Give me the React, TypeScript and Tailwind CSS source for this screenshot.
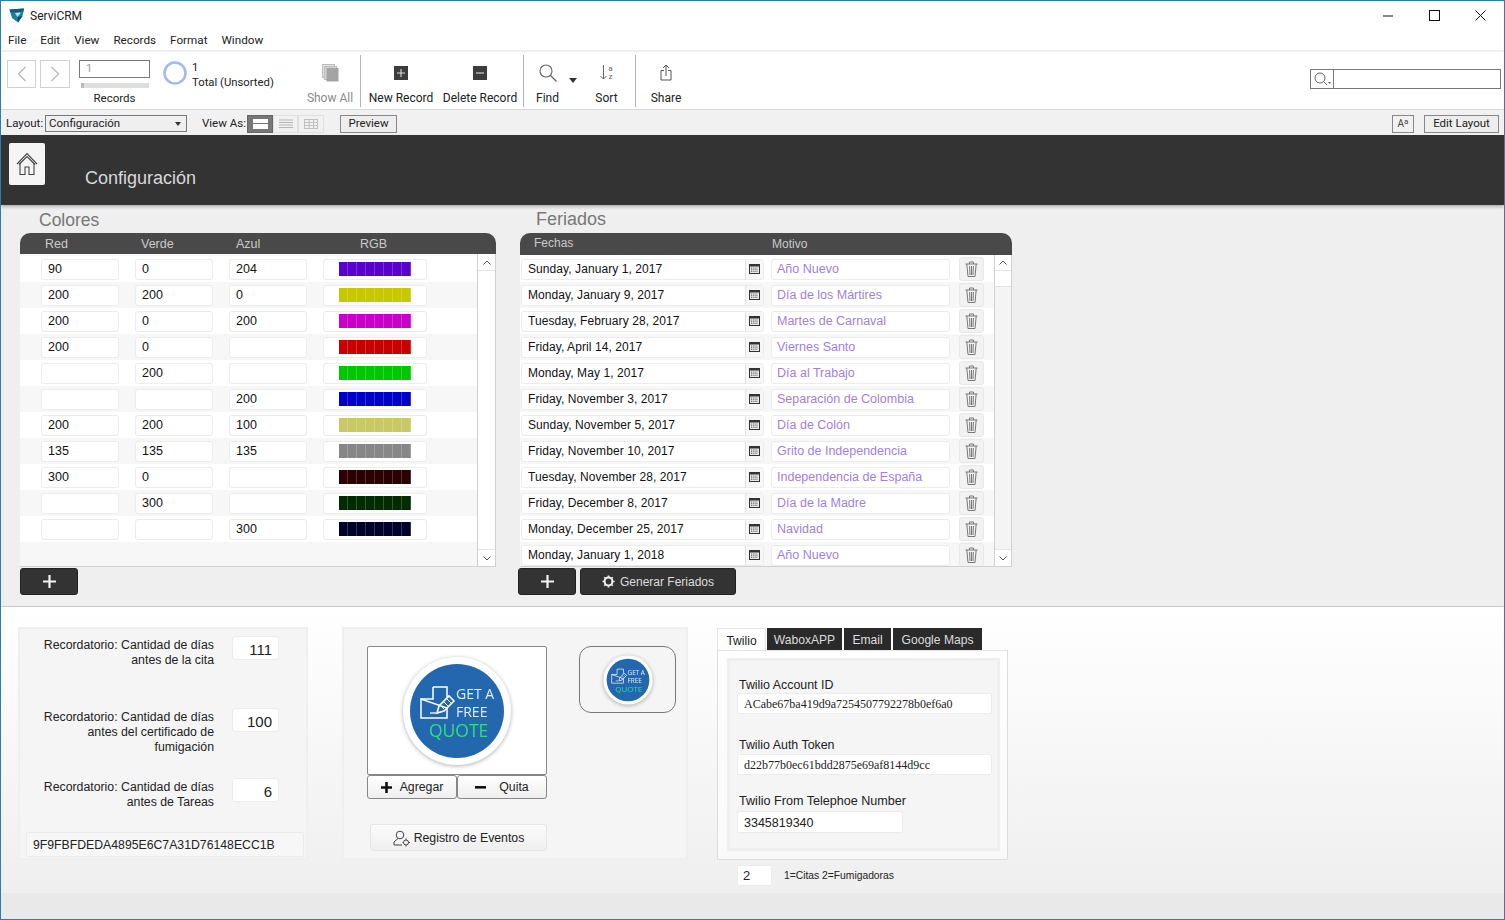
import React from "react";

const sans = "font-['Liberation_Sans',Arial,sans-serif]";
const ui = "font-['Roboto',sans-serif]";

const colours: [string, string, string, number[]][] = [
  ["90", "0", "204", [90, 0, 204]],
  ["200", "200", "0", [200, 200, 0]],
  ["200", "0", "200", [200, 0, 200]],
  ["200", "0", "", [200, 0, 0]],
  ["", "200", "", [0, 200, 0]],
  ["", "", "200", [0, 0, 200]],
  ["200", "200", "100", [200, 200, 100]],
  ["135", "135", "135", [135, 135, 135]],
  ["300", "0", "", [44, 0, 0]],
  ["", "300", "", [0, 44, 0]],
  ["", "", "300", [0, 0, 44]],
];

const holidays = [
  ["Sunday, January 1, 2017", "Año Nuevo"],
  ["Monday, January 9, 2017", "Día de los Mártires"],
  ["Tuesday, February 28, 2017", "Martes de Carnaval"],
  ["Friday, April 14, 2017", "Viernes Santo"],
  ["Monday, May 1, 2017", "Día al Trabajo"],
  ["Friday, November 3, 2017", "Separación de Colombia"],
  ["Sunday, November 5, 2017", "Día de Colón"],
  ["Friday, November 10, 2017", "Grito de Independencia"],
  ["Tuesday, November 28, 2017", "Independencia de España"],
  ["Friday, December 8, 2017", "Día de la Madre"],
  ["Monday, December 25, 2017", "Navidad"],
  ["Monday, January 1, 2018", "Año Nuevo"],
];

function Chevron({ dir }: { dir: "up" | "down" }) {
  return (
    <svg width="8" height="5" viewBox="0 0 8 5" fill="none" stroke="#555" strokeWidth="1">
      <path d={dir === "up" ? "M0.5 4.5 L4 1 L7.5 4.5" : "M0.5 0.5 L4 4 L7.5 0.5"} />
    </svg>
  );
}

function Trash() {
  return (
    <svg width="13" height="16" viewBox="0 0 13 16" fill="none" stroke="#777" strokeWidth="1">
      <path d="M0.5 3 H12.5 M4.5 3 V1 H8.5 V3" />
      <path d="M1.8 3 L3 15.5 H10 L11.2 3" />
      <path d="M4.6 5 L5 14 M6.5 5 V14 M8.4 5 L8 14" />
    </svg>
  );
}

function CalendarIcon() {
  return (
    <svg width="11" height="10" viewBox="0 0 11 10">
      <rect x="0" y="0" width="11" height="10" fill="#333" />
      <rect x="1" y="2.5" width="9" height="6.5" fill="#e8e8e8" />
      <path d="M2 4 H9 M2 5.7 H9 M2 7.4 H9" stroke="#555" strokeWidth="0.9" strokeDasharray="1 0.8" />
    </svg>
  );
}

function Gear({ size = 13, color = "#eee" }: { size?: number; color?: string }) {
  return (
    <svg width={size} height={size} viewBox="0 0 14 14" fill="none">
      <circle cx="7" cy="7" r="4.2" stroke={color} strokeWidth="2.2" />
      <path d="M7 0.5 V2.5 M7 11.5 V13.5 M0.5 7 H2.5 M11.5 7 H13.5 M2.4 2.4 L3.8 3.8 M10.2 10.2 L11.6 11.6 M2.4 11.6 L3.8 10.2 M10.2 3.8 L11.6 2.4" stroke={color} strokeWidth="1.8" />
    </svg>
  );
}

function QuoteBadge({ size }: { size: number }) {
  return (
    <svg width={size} height={size} viewBox="0 0 110 110" className="drop-shadow-[0_1px_2px_rgba(0,0,0,0.3)]">
      <circle cx="55" cy="55" r="54" fill="#fff" />
      <circle cx="55" cy="55" r="47" fill="#2368ae" />
      <path d="M31 31 H45 V41 M45 52 V62 H19 V43 Z" fill="none" stroke="#fff" strokeWidth="1.5" />
      <path d="M19 43 H31 V31" fill="none" stroke="#fff" strokeWidth="1.5" />
      <path d="M35 57 L37 50 L47 40 L52 45 L42 55 Z" fill="none" stroke="#fff" strokeWidth="1.6" />
      <path d="M39 50 L42 53 M42 46 L46 50 M45 43 L49 47" stroke="#fff" strokeWidth="1" />
      <path d="M28 57 H34" stroke="#fff" strokeWidth="1.3" />
      <text x="54" y="43" fontSize="14" fill="#e6eef7" fontFamily="'Open Sans',sans-serif">GET A</text>
      <text x="54" y="61" fontSize="14" fill="#e6eef7" fontFamily="'Open Sans',sans-serif">FREE</text>
      <text x="27" y="81" fontSize="17.5" fill="#2ee07a" fontFamily="'Open Sans',sans-serif">QUOTE</text>
    </svg>
  );
}

function ToolItem({ label, width, muted, children }: { label: string; width: number; muted?: boolean; children?: React.ReactNode }) {
  return (
    <div style={{ width }} className="flex flex-col items-center shrink-0">
      <div className="h-[35px] mt-[3px] flex items-center justify-center">{children}</div>
      <div className={`text-[12px] leading-[16px] whitespace-nowrap ${muted ? "text-[#8a8a8a]" : "text-[#222]"}`}>{label}</div>
    </div>
  );
}

const Divider = () => <div className="w-px h-[52px] bg-[#b5b5b5] mt-[3px] shrink-0" />;

function Field({ children, className = "" }: { children?: React.ReactNode; className?: string }) {
  return (
    <div className={`h-[21px] bg-white border border-[#ececec] rounded-[3px] flex items-center shrink-0 ${className}`}>{children}</div>
  );
}

function ColorRow({ row, striped }: { row: (typeof colours)[number]; striped: boolean }) {
  const [r, g, b, rgb] = row;
  return (
    <div className={`h-[26px] flex items-center pl-[21px] gap-[16px] text-[12.5px] ${striped ? "bg-[#f7f7f7]" : "bg-white"}`}>
      {[r, g, b].map((v, i) => (
        <Field key={i} className="w-[78px] pl-[6px]">{v}</Field>
      ))}
      <Field className="w-[104px] pl-[15px]">
        <div className="flex w-[72px] h-[14px]">
          {Array.from({ length: 8 }).map((_, i) => (
            <div key={i} className="flex-1 border-r border-white/20" style={{ backgroundColor: `rgb(${rgb.join(",")})` }} />
          ))}
        </div>
      </Field>
    </div>
  );
}

function HolidayRow({ date, reason, striped }: { date: string; reason: string; striped: boolean }) {
  return (
    <div className={`h-[26px] flex items-center pl-px ${striped ? "bg-[#f7f7f7]" : "bg-white"}`}>
      <Field className="w-[243px] pl-[6px] justify-between tracking-[0.08px]">
        <span>{date}</span>
        <span className="w-[18px] h-[19px] border-l border-[#e2e2e2] bg-[#f7f7f7] flex items-center justify-center"><CalendarIcon /></span>
      </Field>
      <Field className="w-[179px] ml-[7px] pl-[5px] text-[#a27fdc] text-[12.5px]">{reason}</Field>
      <div className="w-[25px] h-[24px] ml-[10px] bg-[#f2f2f2] border border-[#e8e8e8] rounded-[3px] flex items-center justify-center shrink-0 -translate-x-px"><Trash /></div>
    </div>
  );
}

function DarkButton({ children, width }: { children: React.ReactNode; width: number }) {
  return (
    <div style={{ width }} className="h-[27px] bg-[#333] rounded-[3px] border border-[#222] text-[#ddd] text-[12px] flex items-center justify-center gap-[4px]">{children}</div>
  );
}

const PlusWhite = () => (
  <svg width="13" height="13" viewBox="0 0 13 13"><path d="M6.5 0 V13 M0 6.5 H13" stroke="#f2f2f2" strokeWidth="2.2" /></svg>
);

function ReminderRow({ lines, value, height }: { lines: string[]; value: string; height: number }) {
  return (
    <div style={{ height }} className="flex">
      <div className="w-[188px] text-right text-[12.3px] leading-[15px] text-[#222] pt-[2px] whitespace-nowrap">
        {lines.map((l) => <div key={l}>{l}</div>)}
      </div>
      <div className="ml-[18px] w-[47px] h-[24px] bg-white border border-[#ececec] rounded-[3px] text-right pr-[6px] text-[15px] leading-[25px] text-[#222]">{value}</div>
    </div>
  );
}

export default function App() {
  return (
    <div className={`w-[1505px] h-[920px] overflow-hidden border border-[#2b7db8] bg-white flex flex-col text-[12px] text-[#111] ${sans}`}>
      {/* title bar */}
      <div className={`h-[29px] shrink-0 flex items-center ${ui}`}>
        <svg width="16" height="15" viewBox="0 0 16 15" className="ml-[8px]">
          <path d="M0.5 1.5 L15 0.5 L13.5 8 L9 14.5 L3 10 Z" fill="#1d7f9c" />
          <path d="M0.5 1.5 L15 0.5 L14.5 3.5 L1.5 4.5 Z" fill="#0f5f75" />
          <path d="M6 5 L12 4.5 L8.5 9 Z" fill="#bfe6ee" />
          <path d="M8.5 9 L13.5 8 L9 14.5 Z" fill="#0c5065" />
        </svg>
        <span className="ml-[5px] text-[12px] text-[#222]">ServiCRM</span>
        <div className="ml-auto flex items-center">
          <svg width="11" height="11" viewBox="0 0 11 11" className="mr-[35px]"><path d="M0 6 H10" stroke="#111" /></svg>
          <svg width="11" height="11" viewBox="0 0 11 11" className="mr-[35px]"><rect x="0.5" y="0.5" width="10" height="10" fill="none" stroke="#111" /></svg>
          <svg width="11" height="11" viewBox="0 0 11 11" className="mr-[18px]"><path d="M0.5 0.5 L10.5 10.5 M10.5 0.5 L0.5 10.5" stroke="#111" /></svg>
        </div>
      </div>
      {/* menu */}
      <div className={`h-[20px] shrink-0 flex items-center pl-[7px] gap-[14px] text-[11.7px] text-[#222] pt-[2px] ${ui}`}>
        {["File", "Edit", "View", "Records", "Format", "Window"].map((m) => <span key={m}>{m}</span>)}
      </div>
      {/* toolbar */}
      <div className={`h-[60px] shrink-0 flex border-t-2 border-t-[#f0f0f0] border-b border-b-[#d8d8d8] pl-[6px] ${ui}`}>
        <div className="w-[29px] h-[28px] mt-[8px] border border-[#d0d0d0] flex items-center justify-center">
          <svg width="10" height="16" viewBox="0 0 10 16"><path d="M8.5 1 L1.5 8 L8.5 15" fill="none" stroke="#bbb" strokeWidth="1.4" /></svg>
        </div>
        <div className="w-[30px] h-[28px] mt-[8px] ml-[4px] border border-[#d0d0d0] flex items-center justify-center">
          <svg width="10" height="16" viewBox="0 0 10 16"><path d="M1.5 1 L8.5 8 L1.5 15" fill="none" stroke="#bbb" strokeWidth="1.4" /></svg>
        </div>
        <div className="ml-[9px] w-[71px] flex flex-col">
          <div className="h-[18px] mt-[8px] border border-[#777] text-[11px] text-[#999] pl-[6px] leading-[16px]">1</div>
          <div className="h-[5px] mt-[5px] ml-[2px] w-[68px] bg-[#dedede] border-l-[3px] border-l-[#bbb]" />
          <div className="text-center text-[11.5px] leading-[16px] mt-[2px] text-[#222]">Records</div>
        </div>
        <svg width="24" height="24" viewBox="0 0 24 24" className="ml-[13px] mt-[9px] shrink-0"><circle cx="12" cy="12" r="10.5" fill="none" stroke="#a4b9f0" strokeWidth="2.6" /></svg>
        <div className="ml-[5px] w-[112px] shrink-0 pt-[8px] text-[11.3px] leading-[15px] text-[#222]">
          <div>1</div>
          <div className="whitespace-nowrap">Total (Unsorted)</div>
        </div>
        <ToolItem label="Show All" width={52} muted>
          <svg width="17" height="18" viewBox="0 0 17 18">
            <rect x="0.5" y="0.5" width="12" height="13" fill="#e4e4e4" stroke="#bbb" />
            <rect x="2.5" y="2.5" width="12" height="13" fill="#d4d4d4" stroke="#bbb" />
            <rect x="4.5" y="4" width="12" height="13.5" fill="#a4a4a4" />
          </svg>
        </ToolItem>
        <div className="w-[4px] shrink-0" />
        <Divider />
        <ToolItem label="New Record" width={80}>
          <svg width="14" height="14" viewBox="0 0 14 14"><rect width="14" height="14" fill="#3c3c3c" /><path d="M7 3 V11 M3 7 H11" stroke="#ddd" strokeWidth="1.1" /></svg>
        </ToolItem>
        <ToolItem label="Delete Record" width={78}>
          <svg width="14" height="14" viewBox="0 0 14 14"><rect width="14" height="14" fill="#3c3c3c" /><path d="M3 7 H11" stroke="#ddd" strokeWidth="1.1" /></svg>
        </ToolItem>
        <div className="w-[4px] shrink-0" />
        <Divider />
        <ToolItem label="Find" width={47}>
          <svg width="18" height="18" viewBox="0 0 18 18" fill="none" stroke="#666"><circle cx="7" cy="7" r="6" strokeWidth="1.1" /><path d="M11.5 11.5 L17.5 17.5" strokeWidth="1.3" /></svg>
        </ToolItem>
        <svg width="8" height="5" viewBox="0 0 8 5" className="mt-[26px] shrink-0 -ml-[2px]"><path d="M0 0 H8 L4 5 Z" fill="#333" /></svg>
        <div className="ml-[6px] shrink-0">
          <ToolItem label="Sort" width={47}>
            <div className="flex items-center text-[#666]">
              <svg width="7" height="15" viewBox="0 0 7 15"><path d="M3.5 0 V14 M0.5 11 L3.5 14 L6.5 11" fill="none" stroke="#666" /></svg>
              <span className="text-[8px] leading-[8px] flex flex-col items-center ml-[1px]"><span>a</span><span>z</span></span>
            </div>
          </ToolItem>
        </div>
        <div className="w-[5px] shrink-0" />
        <Divider />
        <ToolItem label="Share" width={60}>
          <svg width="12" height="17" viewBox="0 0 12 17" fill="none" stroke="#555"><path d="M6 12 V1 M3 4 L6 1 L9 4" /><path d="M4 6.5 H1 V16 H11 V6.5 H8" /></svg>
        </ToolItem>
        <div className="ml-auto mr-[3px] mt-[17px] w-[191px] h-[20px] border border-[#777] flex shrink-0">
          <div className="w-[23px] border-r border-[#777] flex items-center justify-center">
            <svg width="17" height="14" viewBox="0 0 17 14" fill="none" stroke="#666"><circle cx="6" cy="6" r="5" /><path d="M9.5 9.5 L13 13" /><path d="M14 10 H17 L15.5 12 Z" fill="#666" stroke="none" /></svg>
          </div>
        </div>
      </div>
      {/* layout bar */}
      <div className={`h-[25px] shrink-0 bg-[#f1f1f1] flex items-center text-[11.5px] text-[#222] pl-[5px] pt-[2px] ${ui}`}>
        <span className="w-[39px] whitespace-nowrap">Layout:</span>
        <div className="w-[142px] h-[17px] border border-[#777] flex items-center pl-[3px] pr-[5px] justify-between bg-[#efefef]">
          <span>Configuración</span>
          <svg width="6" height="4" viewBox="0 0 6 4"><path d="M0 0 H6 L3 4 Z" fill="#333" /></svg>
        </div>
        <span className="ml-[15px] w-[43px] whitespace-nowrap">View As:</span>
        <div className="ml-[2px] w-[26px] h-[18px] bg-[#777] border border-[#666] flex items-center justify-center">
          <div className="w-[15px] h-[10px] bg-white flex flex-col justify-center"><div className="h-px bg-[#777]" /></div>
        </div>
        <div className="w-[25px] h-[18px] border border-[#e0e0e0] flex items-center justify-center">
          <svg width="14" height="10" viewBox="0 0 14 10"><path d="M0 1 H14 M0 3.5 H14 M0 6 H14 M0 8.5 H14" stroke="#b5b5b5" /></svg>
        </div>
        <div className="w-[26px] h-[18px] border border-[#e0e0e0] flex items-center justify-center">
          <svg width="14" height="10" viewBox="0 0 14 10" fill="none" stroke="#c0c0c0"><rect x="0.5" y="0.5" width="13" height="9" /><path d="M0 3.5 H14 M0 6.5 H14 M5 0 V10 M9.5 0 V10" /></svg>
        </div>
        <div className="ml-[16px] w-[57px] h-[18px] border border-[#888] bg-[#eee] flex items-center justify-center">Preview</div>
        <div className="ml-auto w-[22px] h-[18px] border border-[#888] flex items-center justify-center text-[10px] text-[#444]">A<span className="text-[8px] mt-[-3px]">a</span></div>
        <div className="ml-[10px] mr-[5px] w-[75px] h-[18px] border border-[#888] bg-[#eee] flex items-center justify-center">Edit Layout</div>
      </div>
      {/* page header */}
      <div className="h-[70px] shrink-0 bg-[#333] flex shadow-[0_2px_3px_rgba(0,0,0,0.25)] relative">
        <div className="ml-[8px] mt-[8px] w-[36px] h-[42px] bg-[#f5f5f5] rounded-[2px] flex items-center justify-center">
          <svg width="22" height="24" viewBox="0 0 22 24" fill="none" stroke="#444" strokeWidth="1.1">
            <path d="M1 12 L11 1.5 L21 12" />
            <path d="M3 12.5 L11 4.5 L19 12.5" />
            <path d="M4 11 V22.5 H9 V15 H13 V22.5 H18 V11" />
          </svg>
        </div>
        <div className="ml-[40px] mt-[32px] text-[18px] leading-[22px] text-[#d8d8d8]">Configuración</div>
      </div>
      {/* tables */}
      <div className="h-[402px] shrink-0 bg-[#efefef] border-b border-[#c8c8c8] flex pl-[19px] text-[12px]">
        <div className="w-[476px] shrink-0 flex flex-col">
          <div className="h-[28px] pl-[19px] pt-[5px] text-[17.5px] leading-[20px] text-[#777]">Colores</div>
          <div className="h-[21px] bg-[#494949] rounded-t-[10px] flex text-[#c9c9c9] text-[12.5px] leading-[22px]">
            <span className="ml-[25px] w-[96px]">Red</span>
            <span className="w-[95px]">Verde</span>
            <span className="w-[124px]">Azul</span>
            <span>RGB</span>
          </div>
          <div className="h-[313px] flex bg-[#f7f7f7] border-b border-[#d0d0d0] border-r">
            <div className="w-[458px] border-r border-[#d0d0d0] pt-[2px]">
              {colours.map((c, i) => <ColorRow key={i} row={c} striped={i % 2 === 1} />)}
            </div>
            <div className="flex-1 flex flex-col justify-between bg-white">
              <div className="h-[17px] flex items-center justify-center border-b border-[#e4e4e4]"><Chevron dir="up" /></div>
              <div className="h-[17px] flex items-center justify-center border-t border-[#e4e4e4]"><Chevron dir="down" /></div>
            </div>
          </div>
          <div className="mt-px"><DarkButton width={58}><PlusWhite /></DarkButton></div>
        </div>
        <div className="w-[492px] ml-[24px] shrink-0 flex flex-col">
          <div className="h-[28px] pl-[16px] pt-[4px] text-[18px] leading-[20px] text-[#777]">Feriados</div>
          <div className="h-[22px] bg-[#494949] rounded-t-[10px] flex text-[#c9c9c9] text-[12px]">
            <span className="ml-[14px] w-[238px] leading-[20px]">Fechas</span>
            <span className="leading-[22px]">Motivo</span>
          </div>
          <div className="h-[312px] flex bg-white border-b border-r border-[#d0d0d0] overflow-hidden">
            <div className="w-[475px] border-r border-[#d0d0d0] overflow-hidden pt-px">
              {holidays.map((h, i) => <HolidayRow key={i} date={h[0]} reason={h[1]} striped={i % 2 === 1} />)}
            </div>
            <div className="flex-1 flex flex-col bg-[#f4f4f4]">
              <div className="h-[16px] bg-white flex items-center justify-center border-b border-[#e4e4e4]"><Chevron dir="up" /></div>
              <div className="h-[16px] bg-white border-b border-[#e4e4e4]" />
              <div className="h-[17px] mt-auto bg-white flex items-center justify-center border-t border-[#e4e4e4]"><Chevron dir="down" /></div>
            </div>
          </div>
          <div className="flex gap-[4px] mt-px -ml-[2px]">
            <DarkButton width={58}><PlusWhite /></DarkButton>
            <DarkButton width={156}><Gear /> <span className="ml-px">Generar Feriados</span></DarkButton>
          </div>
        </div>
      </div>
      {/* settings */}
      <div className="h-[286px] shrink-0 bg-gradient-to-b from-white to-[#efefef] flex pl-[17px] pt-[20px]">
        <div className="w-[290px] h-[233px] bg-[#f5f5f5] border-2 border-[#efefef] shrink-0 flex flex-col pl-[6px] pt-[7px]">
          <ReminderRow lines={["Recordatorio: Cantidad de días", "antes de la cita"]} value="111" height={72} />
          <ReminderRow lines={["Recordatorio: Cantidad de días", "antes del certificado de", "fumigación"]} value="100" height={70} />
          <ReminderRow lines={["Recordatorio: Cantidad de días", "antes de Tareas"]} value="6" height={55} />
          <div className="w-[278px] h-[25px] bg-[#f7f7f7] border border-[#ebebeb] rounded-[2px] pl-[6px] text-[12.25px] leading-[25px] text-[#222] -mt-px">9F9FBFDEDA4895E6C7A31D76148ECC1B</div>
        </div>
        <div className="ml-[34px] w-[346px] h-[233px] bg-[#f5f5f5] border-2 border-[#efefef] shrink-0 flex pl-[23px] pt-[17px] text-[12.3px]">
          <div className="w-[180px] flex flex-col">
            <div className="h-[129px] bg-white border border-[#888] rounded-[2px] flex items-center justify-center">
              <QuoteBadge size={110} />
            </div>
            <div className="flex h-[24px]">
              <div className="w-[90px] border border-[#888] rounded-[3px] bg-gradient-to-b from-white to-[#eee] flex items-center justify-center gap-[8px] pt-px">
                <svg width="11" height="11" viewBox="0 0 11 11"><path d="M5.5 0 V11 M0 5.5 H11" stroke="#111" strokeWidth="2.6" /></svg>
                <span className="text-[#222]">Agregar</span>
              </div>
              <div className="w-[90px] border border-[#888] rounded-[3px] bg-gradient-to-b from-white to-[#eee] flex items-center justify-center gap-[13px] pt-px">
                <svg width="11" height="3" viewBox="0 0 11 3"><rect width="11" height="2.6" fill="#111" /></svg>
                <span className="text-[#222]">Quita</span>
              </div>
            </div>
            <div className="ml-[3px] mt-[25px] h-[27px] w-[177px] bg-gradient-to-b from-[#fbfbfb] to-[#efefef] border border-[#e6e6e6] rounded-[3px] flex items-center justify-center gap-[3px] text-[#222] pt-px">
              <svg width="18" height="17" viewBox="0 0 18 17" fill="none" stroke="#444">
                <circle cx="7" cy="5" r="3.8" />
                <path d="M5 8.5 L1 12 V15 H9" />
                <circle cx="13" cy="12.5" r="2.5" />
                <path d="M13 8.5 V10 M13 15 V16.5 M9.5 12.5 H10.5 M15.5 12.5 H17" />
              </svg>
              <span>Registro de Eventos</span>
            </div>
          </div>
          <div className="ml-[32px] w-[97px] h-[67px] border border-[#777] rounded-[12px] flex items-center justify-center">
            <QuoteBadge size={50} />
          </div>
        </div>
        <div className="ml-[29px] w-[291px] shrink-0 flex flex-col text-[12.4px]">
          <div className="flex h-[23px] items-end leading-[24px] text-center text-[12.1px]">
            <div className="w-[49px] h-[22px] bg-white border border-[#e4e4e4] border-b-0 text-[#222]">Twilio</div>
            <div className="ml-px w-[75px] h-[22px] bg-[#2a2a2a] text-[#ddd]">WaboxAPP</div>
            <div className="ml-[2px] w-[47px] h-[22px] bg-[#2a2a2a] text-[#ddd]">Email</div>
            <div className="ml-[2px] w-[89px] h-[22px] bg-[#2a2a2a] text-[#ddd]">Google Maps</div>
          </div>
          <div className="h-[210px] border border-[#dcdcdc] border-t-[#e4e4e4] bg-white/60 pl-[9px] pt-[7px] pr-[7px] rounded-b-[2px]">
            <div className="h-[193px] bg-[#f5f5f5] border-[3px] border-[#efefef] pl-[7px] pr-[5px] pt-[17px] text-[#222]">
              <div className="leading-[15px] pl-[2px]">Twilio Account ID</div>
              <div className="h-[21px] bg-white border border-[#ececec] rounded-[2px] pl-[6px] text-[12px] font-['Liberation_Serif',serif] leading-[21px] whitespace-nowrap">ACabe67ba419d9a7254507792278b0ef6a0</div>
              <div className="leading-[15px] pl-[2px] mt-[24px]">Twilio Auth Token</div>
              <div className="h-[21px] mt-px bg-white border border-[#ececec] rounded-[2px] pl-[6px] text-[12px] font-['Liberation_Serif',serif] leading-[21px] whitespace-nowrap">d22b77b0ec61bdd2875e69af8144d9cc</div>
              <div className="leading-[15px] pl-[2px] mt-[19px] text-[12.6px] whitespace-nowrap">Twilio From Telephoe Number</div>
              <div className="h-[22px] w-[166px] mt-[2px] bg-white border border-[#ececec] rounded-[2px] pl-[6px] text-[12.5px] leading-[22px]">3345819340</div>
            </div>
          </div>
          <div className="flex items-center mt-[5px] pl-[20px]">
            <div className="w-[35px] h-[21px] bg-white border border-[#ececec] pl-[5px] leading-[20px] text-[13px] text-[#222]">2</div>
            <span className="ml-[12px] text-[10.3px] text-[#222]">1=Citas 2=Fumigadoras</span>
          </div>
        </div>
      </div>
      <div className="flex-1 bg-[#e9e9e9]" />
    </div>
  );
}
